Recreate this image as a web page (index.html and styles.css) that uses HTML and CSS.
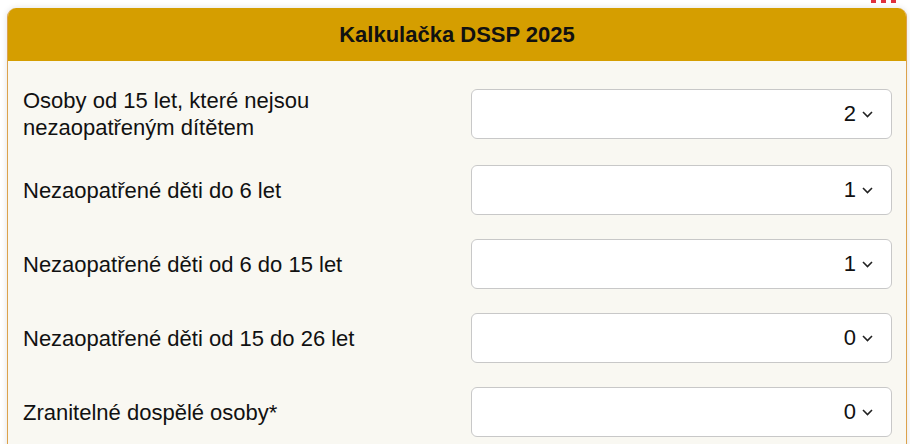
FILE: index.html
```html
<!DOCTYPE html>
<html lang="cs">

<head>
    <meta charset="UTF-8">
    <meta name="viewport" content="width=device-width, initial-scale=1.0">
    <title>Kalkulačka DSSP 2025</title>
    <link rel="stylesheet" href="styles.css">
</head>

<body>
    <div class="dots"><span></span><span></span><span></span></div>

    <div class="calc">
        <div class="calc_head">Kalkulačka DSSP 2025</div>
        <div class="calc_body">
            <div class="row">
                <label class="row_label">Osoby od 15 let, které nejsou nezaopatřeným dítětem</label>
                <div class="pick"><span>2</span>
                    <svg width="11" height="7" viewBox="0 0 11 7"><path d="M1 1l4.5 4.5L10 1" fill="none" stroke="#222" stroke-width="1.6"/></svg>
                </div>
            </div>
            <div class="row">
                <label class="row_label">Nezaopatřené děti do 6 let</label>
                <div class="pick"><span>1</span>
                    <svg width="11" height="7" viewBox="0 0 11 7"><path d="M1 1l4.5 4.5L10 1" fill="none" stroke="#222" stroke-width="1.6"/></svg>
                </div>
            </div>
            <div class="row">
                <label class="row_label">Nezaopatřené děti od 6 do 15 let</label>
                <div class="pick"><span>1</span>
                    <svg width="11" height="7" viewBox="0 0 11 7"><path d="M1 1l4.5 4.5L10 1" fill="none" stroke="#222" stroke-width="1.6"/></svg>
                </div>
            </div>
            <div class="row">
                <label class="row_label">Nezaopatřené děti od 15 do 26 let</label>
                <div class="pick"><span>0</span>
                    <svg width="11" height="7" viewBox="0 0 11 7"><path d="M1 1l4.5 4.5L10 1" fill="none" stroke="#222" stroke-width="1.6"/></svg>
                </div>
            </div>
            <div class="row">
                <label class="row_label">Zranitelné dospělé osoby*</label>
                <div class="pick"><span>0</span>
                    <svg width="11" height="7" viewBox="0 0 11 7"><path d="M1 1l4.5 4.5L10 1" fill="none" stroke="#222" stroke-width="1.6"/></svg>
                </div>
            </div>
        </div>
    </div>
</body>

</html>
```

FILE: styles.css
```css
body {
    margin: 0;
    padding: 8px 0 0 7px;
    background-color: #ffffff;
    font-family: "Liberation Sans", Arial, sans-serif;
    color: #111111;
}

.dots {
    position: absolute;
    top: 0;
    left: 871px;
    display: flex;
    gap: 5px;
}

.dots span {
    width: 5px;
    height: 3px;
    background-color: #e0303c;
}

.calc {
    width: 900px;
    box-sizing: border-box;
    border: 1px solid #dca24c;
    border-top: none;
    border-radius: 9px;
    background-color: #f9f8f2;
    box-shadow: 0 0 6px rgba(0, 0, 0, 0.12);
    overflow: hidden;
}

.calc_head {
    height: 53px;
    display: flex;
    align-items: center;
    justify-content: center;
    background-color: #d59e00;
    font-size: 22px;
    font-weight: bold;
    color: #111111;
}

.calc_body {
    padding: 26px 14px 20px 15px;
    display: flex;
    flex-direction: column;
    gap: 24px;
}

.row {
    display: grid;
    grid-template-columns: 1fr 421px;
    align-items: center;
    column-gap: 20px;
}

.row_label {
    font-size: 22px;
    line-height: 27px;
    padding-right: 40px;
}

.pick {
    height: 50px;
    box-sizing: border-box;
    border: 1px solid #c8c8c8;
    border-radius: 6px;
    background-color: #ffffff;
    display: flex;
    align-items: center;
    justify-content: flex-end;
    gap: 6px;
    padding-right: 18px;
    font-size: 22px;
}

.pick svg {
    display: block;
}
```
